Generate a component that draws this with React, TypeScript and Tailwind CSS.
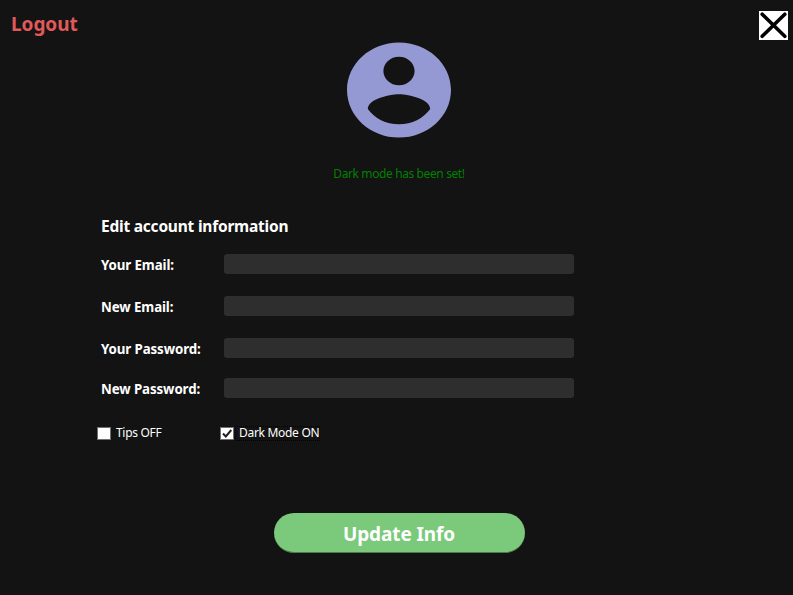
import { useState } from "react";

type Field = { label: string; row: string };

const fields: Field[] = [
  { label: "Your Email:", row: "mb-[22px]" },
  { label: "New Email:", row: "mb-[22px]" },
  { label: "Your Password:", row: "mb-[20px]" },
  { label: "New Password:", row: "" },
];

function AccountIcon() {
  return (
    <svg className="h-[96px] w-[104px]" viewBox="0 0 104 96" fill="#9499d3">
      <g transform="translate(0 .4) scale(5.2 4.76) translate(-2 -2)">
        <path d="M12 2C6.48 2 2 6.48 2 12s4.48 10 10 10 10-4.48 10-10S17.52 2 12 2zm0 3c1.66 0 3 1.34 3 3s-1.34 3-3 3-3-1.34-3-3 1.34-3 3-3zm0 14.2c-2.5 0-4.71-1.28-6-3.22.03-1.99 4-3.08 6-3.08 1.99 0 5.97 1.09 6 3.08-1.29 1.94-3.5 3.22-6 3.22z" />
      </g>
    </svg>
  );
}

function CheckOption({ label, checked, onToggle, focused }: { label: string; checked: boolean; onToggle: () => void; focused?: boolean }) {
  return (
    <button type="button" role="checkbox" aria-checked={checked} onClick={onToggle} className="flex h-[16px] items-center">
      <span className="flex h-[13px] w-[14px] items-center justify-center border border-[#707070] bg-white">
        {checked && (
          <svg className="h-[11px] w-[12px]" viewBox="0 0 12 11" fill="none" stroke="#212121" strokeWidth="2">
            <path d="M2 5.5 4.8 8.4 10.3 2" />
          </svg>
        )}
      </span>
      <span className={focused ? "ml-px flex h-[15px] items-center border border-dotted border-black pl-[3px]" : "flex h-[15px] items-center pl-[5px]"}>
        <span className="whitespace-nowrap pb-[2px] text-[12px] leading-[15px] tracking-[-0.3px]">{label}</span>
      </span>
    </button>
  );
}

export default function App() {
  const [tips, setTips] = useState(false);
  const [dark, setDark] = useState(true);

  return (
    <main className="flex h-[595px] w-[793px] flex-col overflow-hidden bg-[#131313] font-['Noto_Sans','Open_Sans',sans-serif] text-white">
      <header className="flex h-[42px] shrink-0 items-start justify-between pl-[11px] pr-[5px] pt-[11px]">
        <button type="button" className="text-[19px] font-bold leading-[26px] tracking-[-0.05px] text-[#e05a5a]">Logout</button>
        <button type="button" aria-label="Close" className="h-[29px] w-[29px] bg-white">
          <svg className="h-[29px] w-[29px]" viewBox="0 0 29 29" stroke="#000" strokeWidth="3.6" strokeLinecap="round">
            <path d="M3.2 3.2 25.8 25.3M25.8 3.2 3.2 25.3" />
          </svg>
        </button>
      </header>

      <section className="flex h-[140px] shrink-0 flex-col items-center pl-[5px]">
        <AccountIcon />
        <p className="mt-[28px] h-[16px] text-[12px] leading-[16px] tracking-[-0.39px] text-[#008000]">Dark mode has been set!</p>
      </section>

      <form className="flex shrink-0 flex-col pl-[101px] pt-[33px]" onSubmit={(e) => e.preventDefault()}>
        <h1 className="h-[39px] text-[15.5px] font-bold leading-[22px] tracking-[-0.22px]">Edit account information</h1>
        {fields.map((field) => (
          <label key={field.label} className={`flex h-[20px] items-center ${field.row}`}>
            <span className="w-[123px] whitespace-nowrap pt-[2px] text-[13.3px] font-bold leading-[20px] tracking-[-0.1px]">{field.label}</span>
            <input className="h-[20px] w-[350px] rounded-[3px] bg-[#2e2e2e] px-1 text-[12px] outline-none" />
          </label>
        ))}
        <div className="-ml-[4px] mt-[27px] flex">
          <div className="w-[123px]">
            <CheckOption label="Tips OFF" checked={tips} onToggle={() => setTips(!tips)} />
          </div>
          <CheckOption label="Dark Mode ON" checked={dark} onToggle={() => setDark(!dark)} focused />
        </div>
        <button type="submit" className="ml-[173px] mt-[72px] h-[40px] w-[251px] rounded-[20px] border-b border-[#4c7b4c] bg-[#7bc97b] pr-px pt-[2px] text-[19px] font-bold leading-[26px] tracking-[-0.1px]">
          Update Info
        </button>
      </form>
    </main>
  );
}
